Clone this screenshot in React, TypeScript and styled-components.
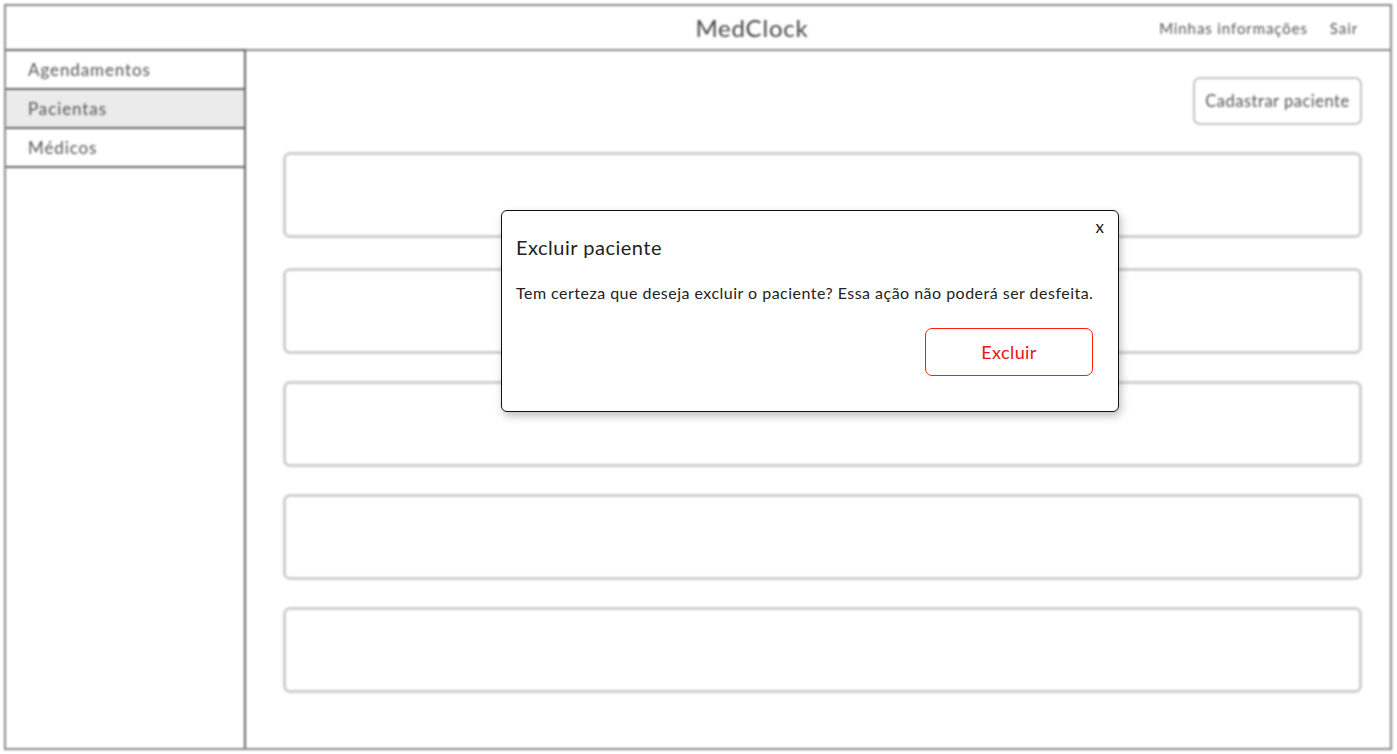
import React from 'react'
import styled, { createGlobalStyle } from 'styled-components'

const GlobalStyle = createGlobalStyle`
  html, body {
    margin: 0;
    padding: 0;
    background: #fff;
    font-family: Lato, 'Open Sans', sans-serif;
  }
`

const Page = styled.div`
  position: relative;
  width: 1397px;
  height: 754px;
  overflow: hidden;
`

const Backdrop = styled.div`
  filter: blur(1.2px);
  padding: 4px 5px 4px 4px;
  height: 100%;
  box-sizing: border-box;
`

const Frame = styled.div`
  display: flex;
  flex-direction: column;
  height: 100%;
  border: 2px solid #8a8a8a;
  box-sizing: border-box;
`

const Header = styled.header`
  display: grid;
  grid-template-columns: 1fr auto 1fr;
  align-items: center;
  height: 43px;
  padding: 0 32px 0 140px;
  border-bottom: 2px solid #8a8a8a;
`

const Brand = styled.div`
  grid-column: 2;
  font-size: 24px;
  color: #444;
  letter-spacing: 0.8px;
`

const Nav = styled.nav`
  justify-self: end;
  display: flex;
  gap: 22px;
  font-size: 15px;
  letter-spacing: 0.9px;
  color: #555;
`

const Body = styled.div`
  flex: 1;
  display: flex;
  min-height: 0;
`

const Sidebar = styled.aside`
  width: 238px;
  margin-top: -2px;
  border-top: 2px solid #666;
  border-right: 2px solid #666;
`

const MenuItem = styled.div<{ $active?: boolean }>`
  height: 37px;
  display: flex;
  align-items: center;
  padding-left: 22px;
  font-size: 17px;
  letter-spacing: 0.9px;
  color: #555;
  background: ${({ $active }) => ($active ? '#ebebeb' : '#fff')};
  border-bottom: 2px solid #666;
`

const Main = styled.main`
  flex: 1;
  display: flex;
  flex-direction: column;
  padding: 26px 28px 0 37px;
`

const Toolbar = styled.div`
  display: flex;
  justify-content: flex-end;
  margin-bottom: 27px;
`

const GhostButton = styled.button`
  width: 169px;
  height: 48px;
  padding: 0;
  border: 2px solid #c4c4c4;
  border-radius: 7px;
  background: #fff;
  font-family: inherit;
  font-size: 16.5px;
  letter-spacing: 0.5px;
  color: #555;
`

const List = styled.div`
  display: flex;
  flex-direction: column;
  gap: 27px;
`

const Card = styled.div`
  height: 80px;
  border: 3px solid #cfcfcf;
  border-radius: 7px;

  &:first-child {
    margin-bottom: 3px;
  }
`

const Modal = styled.div`
  position: absolute;
  left: 501px;
  top: 210px;
  width: 618px;
  height: 202px;
  box-sizing: border-box;
  padding: 24px 20px 0 14px;
  background: #fff;
  border: 1px solid #111;
  border-radius: 6px;
  box-shadow: 2px 4px 8px rgba(0, 0, 0, 0.25);
  display: flex;
  flex-direction: column;
  color: #222;
`

const Close = styled.span`
  position: absolute;
  top: 5px;
  right: 14px;
  font-size: 17px;
  color: #222;
`

const Title = styled.h2`
  margin: 0 0 24px 0;
  font-weight: 400;
  font-size: 20px;
  letter-spacing: 0.5px;
`

const Message = styled.p`
  margin: 0 0 26px 0;
  font-size: 16px;
  letter-spacing: 0.48px;
  white-space: nowrap;
`

const Actions = styled.div`
  display: flex;
  justify-content: flex-end;
  padding-right: 5px;
`

const DangerButton = styled.button`
  width: 168px;
  height: 48px;
  border: 1px solid #ff1a1a;
  border-radius: 7px;
  background: #fff;
  color: #f01010;
  font-family: inherit;
  font-size: 18px;
  letter-spacing: 0.4px;
`

const App = () => {
  const cards = [1, 2, 3, 4, 5]
  return (
    <>
      <GlobalStyle />
      <Page>
        <Backdrop>
          <Frame>
            <Header>
              <Brand>MedClock</Brand>
              <Nav>
                <span>Minhas informações</span>
                <span>Sair</span>
              </Nav>
            </Header>
            <Body>
              <Sidebar>
                <MenuItem>Agendamentos</MenuItem>
                <MenuItem $active>Pacientas</MenuItem>
                <MenuItem>Médicos</MenuItem>
              </Sidebar>
              <Main>
                <Toolbar>
                  <GhostButton>Cadastrar paciente</GhostButton>
                </Toolbar>
                <List>
                  {cards.map((c) => (
                    <Card key={c} />
                  ))}
                </List>
              </Main>
            </Body>
          </Frame>
        </Backdrop>
        <Modal>
          <Close>x</Close>
          <Title>Excluir paciente</Title>
          <Message>Tem certeza que deseja excluir o paciente? Essa ação não poderá ser desfeita.</Message>
          <Actions>
            <DangerButton>Excluir</DangerButton>
          </Actions>
        </Modal>
      </Page>
    </>
  )
}

export default App
